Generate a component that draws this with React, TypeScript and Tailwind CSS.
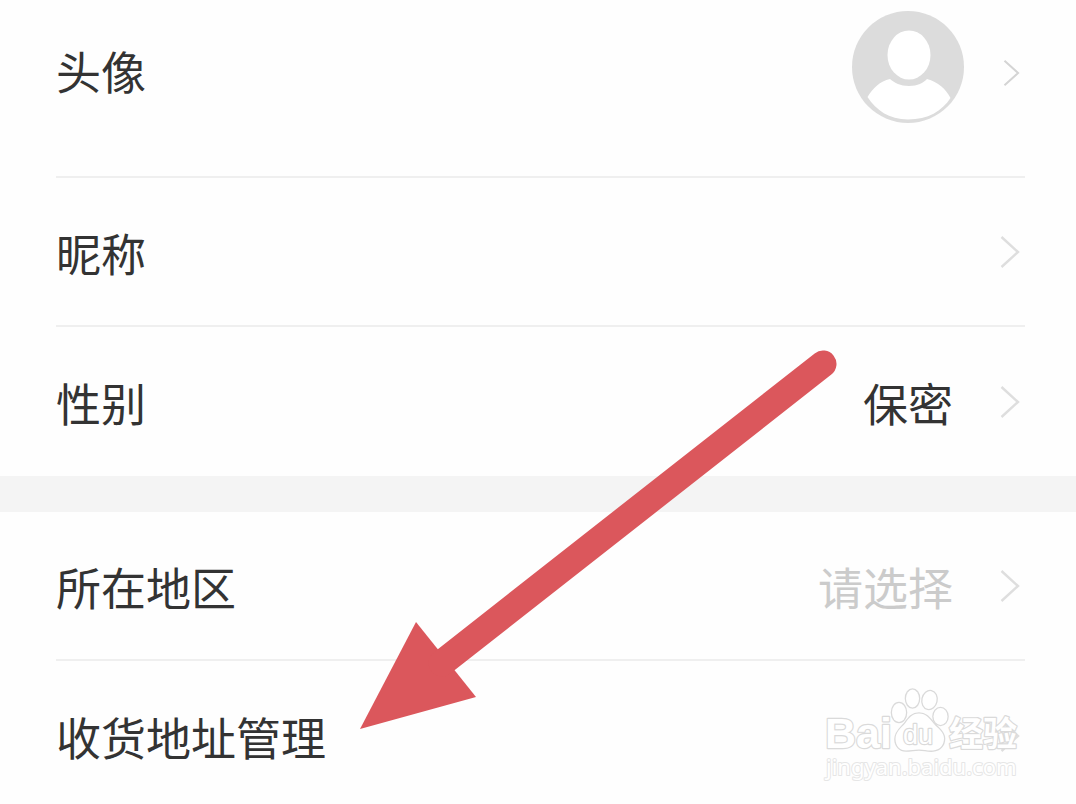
import clsx from 'clsx';

const Chevron = ({ small = false }: { small?: boolean }) => (
  <svg
    viewBox="0 0 20 34"
    className={clsx('shrink-0 fill-none', small ? 'h-7 w-[17px] stroke-[#d4d4d4]' : 'h-[34px] w-5 stroke-[#dedede]')}
    strokeWidth="2.4"
    aria-hidden="true"
  >
    <path d="M1.5 2 L18 17 L1.5 32" />
  </svg>
);

const Avatar = () => (
  <svg viewBox="0 0 112 112" className="size-28 shrink-0" role="img" aria-label="头像">
    <circle cx="56" cy="56" r="56" fill="#dcdcdc" />
    <ellipse cx="57" cy="44" rx="21.5" ry="24.5" fill="#fff" />
    <path
      d="M38 68 C43 72 48 75 57 75 C66 75 71 72 75 68 C86 71 94 78 98.500 87 C90 100 76 108.500 56 108.500 C37 108.500 24 99 15.500 86 C21 77 28 70 38 68 Z"
      fill="#fff"
    />
  </svg>
);

type RowProps = {
  label: string;
  value?: string;
  muted?: boolean;
  last?: boolean;
};

const Row = ({ label, value, muted, last }: RowProps) => (
  <button
    type="button"
    className={clsx(
      'flex h-[149px] w-full items-center text-left',
      !last && 'border-b-2 border-[#efefef]'
    )}
  >
    <span className="flex-1 pt-0.5">{label}</span>
    {value && <span className={clsx('pt-0.5', muted && 'text-[#cbcbcb]')}>{value}</span>}
    <span className="ml-[47px] mr-[5px]">
      <Chevron />
    </span>
  </button>
);

const Arrow = () => (
  <svg
    viewBox="0 0 480 384"
    className="pointer-events-none absolute left-[358px] top-[348px] h-96 w-[480px]"
    aria-hidden="true"
  >
    <path d="M2 381 L58 274 L118 349 Z" fill="#db575c" />
    <path d="M84 315 L465 16" stroke="#db575c" strokeWidth="27" strokeLinecap="round" />
  </svg>
);

const Watermark = () => (
  <svg
    viewBox="0 0 204 100"
    className="pointer-events-none absolute left-[820px] top-[684px] h-[100px] w-[204px] [paint-order:stroke]"
    fill="#fff"
    stroke="#dadada"
    strokeWidth="2.4"
    strokeLinejoin="round"
  >
    <text x="5" y="64" className="font-['Liberation_Sans',sans-serif] text-[43px] font-bold">
      Bai
    </text>
    <g strokeWidth="2.6">
      <ellipse cx="79" cy="28.500" rx="7" ry="9.500" />
      <ellipse cx="92.500" cy="14.500" rx="6.500" ry="9" />
      <ellipse cx="109.500" cy="16" rx="7" ry="9" transform="rotate(12 109.500 16)" />
      <ellipse cx="120.500" cy="32.500" rx="7" ry="8.500" />
      <path d="M99 29.500 C92 29.500 89 34 85 39.500 C81 44 75.500 48 75.500 55 C75.500 62 80 66.500 86 66.500 C91 66.500 94 65.500 99 65.500 C104 65.500 108 67 113 66.500 C120 66 124 61 124 54.500 C124 48 118 44.500 114 40 C109 34 106 29.500 99 29.500 Z" />
    </g>
    <text x="83" y="60" className="font-['Liberation_Sans',sans-serif] text-[27px]">
      du
    </text>
    <text x="129" y="62" className="font-['Noto_Sans_CJK_SC',sans-serif] text-[34px] font-bold">
      经验
    </text>
    <text x="6" y="91" className="font-['Noto_Sans',sans-serif] text-[22px]" stroke="#e6e6e6" strokeWidth="2">
      jingyan.baidu.com
    </text>
  </svg>
);

export default function App() {
  return (
    <main className="relative h-screen overflow-hidden bg-[#fefefe] font-['Noto_Sans_CJK_SC',sans-serif] text-[45px] leading-[64px] text-[#333]">
      <section className="pl-14 pr-[51px]">
        <button
          type="button"
          className="flex h-[178px] w-full items-start border-b-2 border-[#efefef] pt-[11px] text-left"
        >
          <span className="flex-1 pt-7">头像</span>
          <Avatar />
          <span className="ml-[39px] mr-[5px] pt-12">
            <Chevron small />
          </span>
        </button>
        <Row label="昵称" />
        <Row label="性别" value="保密" last />
      </section>
      <div className="h-9 bg-[#f4f4f4]" />
      <section className="pl-14 pr-[51px]">
        <Row label="所在地区" value="请选择" muted />
        <Row label="收货地址管理" last />
      </section>
      <Arrow />
      <Watermark />
    </main>
  );
}
